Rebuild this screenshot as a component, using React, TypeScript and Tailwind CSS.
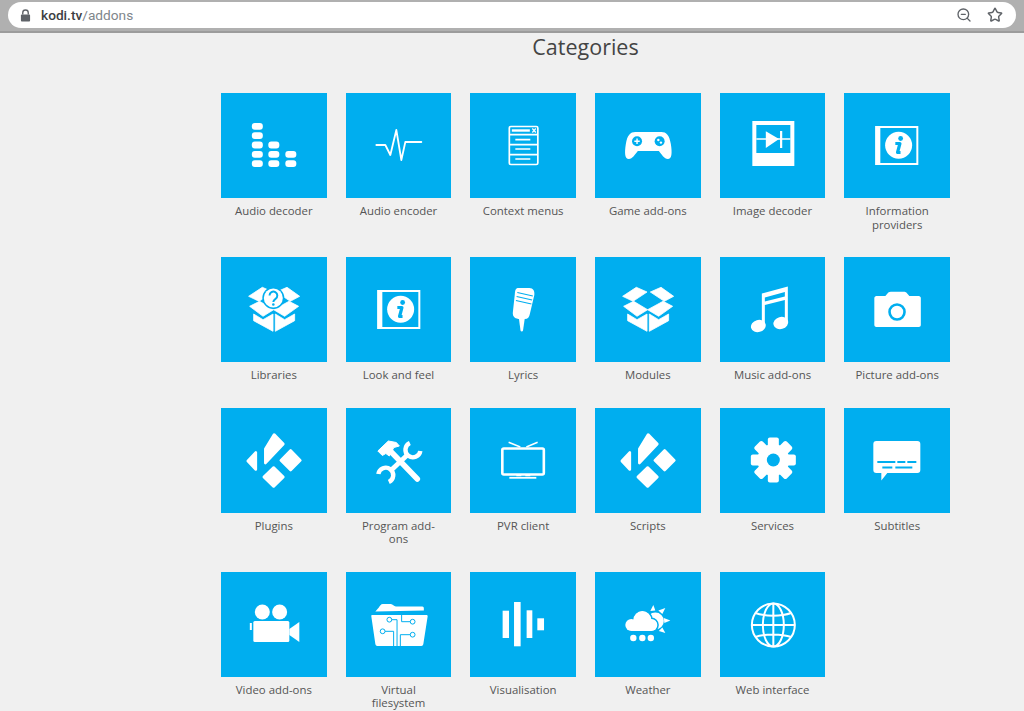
import type { ReactNode } from "react";
import { ZoomOut, Star } from "lucide-react";

const BLUE = "#00aeef";

function Box() {
  return (
    <g fill="#fff" stroke="#fff" strokeWidth="0.8" strokeLinejoin="round">
      <polygon points="27.3,39.3 41,30.3 51.7,35 37.7,44.3" />
      <polygon points="55,35 65.7,30.3 78.3,39.3 69,44.3" />
      <polygon points="28.3,49.3 38.3,44.3 52.3,52.7 41.7,59.3" />
      <polygon points="52.3,52.7 67.7,44.3 77.3,49.3 63.3,59.3" />
      <polygon points="32.3,57 41.7,62.7 51.7,57 51.7,74.3 32.3,63.7" />
      <polygon points="54,57 63.3,62.7 73.3,57 73.3,63.7 54,74.3" />
    </g>
  );
}

function InfoIcon() {
  return (
    <>
      <rect x="32" y="34" width="41" height="37" fill="none" stroke="#fff" strokeWidth="2" />
      <rect x="31" y="33" width="5" height="39" fill="#fff" />
      <circle cx="54.3" cy="52.3" r="13.5" fill="#fff" />
      <circle cx="56.3" cy="45.5" r="2.4" fill={BLUE} />
      <path d="M51 50.5h4.6l-2.4 9h3" fill="none" stroke={BLUE} strokeWidth="3.2" strokeLinejoin="round" />
    </>
  );
}

function KodiIcon() {
  return (
    <g fill="#fff" stroke="#fff" strokeWidth="2.6" strokeLinejoin="round">
      <polygon points="26.5,53 34.5,44.5 34.5,61.5" />
      <polygon points="44,41 52.8,26.5 62,36 44,55" />
      <polygon points="69.3,42.5 79,52.3 69.3,62 59.5,52.3" />
      <polygon points="52.3,59.5 62,69 52.3,78.5 42.5,69" />
    </g>
  );
}

function GearIcon() {
  const angles = [0, 45, 90, 135, 180, 225, 270, 315];
  return (
    <>
      <circle cx="53" cy="52" r="16" fill="#fff" />
      {angles.map((a) => (
        <rect key={a} x="47.5" y="29.5" width="11" height="10" rx="2" fill="#fff" transform={`rotate(${a} 53 52)`} />
      ))}
      <circle cx="53" cy="52" r="6.5" fill={BLUE} />
    </>
  );
}

const icons: Record<string, ReactNode> = {
  audioDecoder: (
    <g fill="#fff">
      {[33.3, 42.7, 52, 61.3, 70.7].map((y) => (
        <rect key={y} x="30.5" y={y - 3.4} width="11" height="6.8" rx="3" />
      ))}
      {[52, 61.3, 70.7].map((y) => (
        <rect key={y} x="47" y={y - 3.4} width="11" height="6.8" rx="3" />
      ))}
      {[61.3, 70.7].map((y) => (
        <rect key={y} x="64" y={y - 3.4} width="11" height="6.8" rx="3" />
      ))}
    </g>
  ),
  audioEncoder: (
    <polyline points="30,52 39,52 44,62 50,37 55,67 59,49 75,49" fill="none" stroke="#fff" strokeWidth="1.8" strokeLinejoin="round" strokeLinecap="round" />
  ),
  contextMenus: (
    <g fill="none" stroke="#fff" strokeWidth="1.7">
      <rect x="39" y="33.5" width="28.5" height="38" rx="1.5" />
      <path d="M39 41.7h28.5M39 51.7h28.5M39 61.7h28.5M45 46.7h15M45 56h15M45 66h15" />
      <path d="M41.5 37.5h18" strokeWidth="2.4" />
      <path d="M62 35.500l3.5 4M65.500 35.500l-3.5 4" strokeWidth="1.2" />
    </g>
  ),
  game: (
    <>
      <path d="M40 39h26c5 0 8 3 9.500 12 1.500 9 1 15-3 15-3.500 0-6.500-5-9-8H42.500c-2.500 3-5.500 8-9 8-4 0-4.500-6-3-15C32 42 35 39 40 39z" fill="#fff" />
      <circle cx="41.7" cy="48.3" r="5" fill={BLUE} />
      <circle cx="64.3" cy="48.3" r="5" fill={BLUE} />
      <path d="M39 48.3h5.400M41.700 45.600v5.400" stroke="#fff" strokeWidth="1.4" />
      <circle cx="63" cy="47" r="1.2" fill="#fff" />
      <circle cx="65.6" cy="49.6" r="1.2" fill="#fff" />
    </>
  ),
  imageDecoder: (
    <>
      <path d="M32 28h42v45H32zM36 32v28h34V32z" fill="#fff" fillRule="evenodd" />
      <path d="M36 46h34" stroke="#fff" strokeWidth="1.4" />
      <polygon points="45.5,38.3 58.7,46 45.5,55" fill="#fff" />
      <rect x="59.7" y="38" width="2.2" height="17" fill="#fff" />
    </>
  ),
  info: <InfoIcon />,
  libraries: (
    <>
      <Box />
      <circle cx="52" cy="41" r="11" fill={BLUE} />
      <circle cx="52" cy="41" r="9.5" fill="#fff" />
      <path d="M48.200 38.500a3.900 3.900 0 1 1 6 3.300c-1.500 1-2.200 1.500-2.200 3.200" fill="none" stroke={BLUE} strokeWidth="2" />
      <circle cx="52" cy="47.500" r="1.3" fill={BLUE} />
    </>
  ),
  lyrics: (
    <>
      <path d="M48 31h11c4 0 5.500 3 5 7l-4.500 19c-.5 3-2 5-5 5h-5c-4 0-7.500-2-7-6.500L44.500 37c.3-4 1-6 3.500-6z" fill="#fff" />
      <path d="M47 35.500l15.500 3.500M46.300 39.500l15.500 3.500M45.600 43.500l15.500 3.500" stroke={BLUE} strokeWidth="1.2" />
      <path d="M48.500 61h6l-1.800 12.500a1.300 1.300 0 0 1-2.500 0z" fill="#fff" />
    </>
  ),
  modules: <Box />,
  music: (
    <>
      <ellipse cx="38" cy="69" rx="7.500" ry="6" fill="#fff" transform="rotate(-15 38 69)" />
      <ellipse cx="60.5" cy="66" rx="7.500" ry="6" fill="#fff" transform="rotate(-15 60.5 66)" />
      <path d="M41.500 69V36.500L67.500 29.500V66h-3V43l-20 5v21zM44.500 40.500v4L64.500 39.500v-4.500z" fill="#fff" fillRule="evenodd" />
    </>
  ),
  camera: (
    <>
      <path d="M32 39h9l3-3.500c.8-.6 1.500-.8 2.500-.8h13c1 0 2 .3 2.500.8l3 3.500h9.500c1 0 2 1 2 2v27c0 1-1 2-2 2H32c-1 0-2-1-2-2V41c0-1 1-2 2-2z" fill="#fff" />
      <circle cx="52.7" cy="55" r="7.5" fill="none" stroke={BLUE} strokeWidth="2.6" />
    </>
  ),
  tools: (
    <g fill="none" stroke="#fff" strokeLinejoin="round">
      <path d="M63.500 35A7.500 7.500 0 1 0 74 43" strokeWidth="4.4" />
      <path d="M42.500 74A7.500 7.500 0 1 0 32 66" strokeWidth="4.4" />
      <path d="M61 47L45 62" strokeWidth="4.8" />
      <path d="M44 43l27 28" strokeWidth="5.5" strokeLinecap="round" />
      <polygon points="31.500,43 42,33 50,34.500 53,38 47.500,39.500 43,48 39.500,45.500 36,47.500" fill="#fff" strokeWidth="1" />
    </g>
  ),
  pvr: (
    <g fill="none" stroke="#fff">
      <rect x="32" y="40.500" width="41.500" height="26" rx="1.5" strokeWidth="2.6" />
      <path d="M38.300 34.300L50 39M67.300 34.300L56 39" strokeWidth="1.5" />
      <path d="M39 69.800h27" strokeWidth="1.8" />
      <path d="M46 67.500h5M55 67.500h5" strokeWidth="1.6" />
    </g>
  ),
  gear: <GearIcon />,
  subtitles: (
    <>
      <path d="M32 33h41c2 0 3 1 3 3v26c0 2-1 3-3 3H43l-6 7.500V65h-5c-2 0-3-1-3-3V36c0-2 1-3 3-3z" fill="#fff" />
      <path d="M33 54h18M53 54h8M63 54h9M38 59.500h10M51 59.500h17" stroke={BLUE} strokeWidth="2" />
    </>
  ),
  video: (
    <g fill="#fff">
      <circle cx="41" cy="40" r="7.5" />
      <circle cx="58.3" cy="40" r="7.5" />
      <rect x="32" y="49" width="36" height="21" rx="1.5" />
      <polygon points="68,57 78,50 78,70 68,63" />
      <rect x="28.5" y="51" width="2" height="7" />
    </g>
  ),
  folder: (
    <>
      <path d="M29 39.500l3.500-4c1-1.500 2-3.500 4-3.500h8c2 0 3 2.500 5 2.500H76c1 0 1.500 1 1.500 1.700v2.300z" fill="#fff" />
      <path d="M26 43h54c1 0 1.500.5 1.300 1.500L77 72c-.2 1.300-1 2-2 2H31c-1 0-1.800-.7-2-2L25 44.500C24.800 43.500 25 43 26 43z" fill="#fff" />
      <g fill="none" stroke={BLUE} strokeWidth="1">
        <circle cx="43" cy="47.7" r="2.4" />
        <path d="M45.400 47.700h5.300v26.300" />
        <circle cx="36.3" cy="59.3" r="2.4" />
        <path d="M38.700 59.300h8.600v14.700" />
        <circle cx="66.3" cy="49.7" r="2.4" />
        <path d="M63.900 49.700h-8.600v-7" />
        <circle cx="66.3" cy="62.7" r="2.4" />
        <path d="M63.900 62.700H54v11.300" />
      </g>
    </>
  ),
  visualisation: (
    <g fill="#fff">
      <rect x="32.3" y="38.7" width="6.4" height="27.3" />
      <rect x="43.7" y="30" width="6.6" height="44.3" />
      <rect x="56.3" y="38.3" width="5.7" height="27.7" />
      <rect x="67" y="46.3" width="6.7" height="12" />
    </g>
  ),
  weather: (
    <>
      <g fill="#fff">
        <circle cx="60" cy="49" r="8.5" />
        <polygon points="55,39 58,33 60,38.500" />
        <polygon points="63,38.500 70,36 67,42" />
        <polygon points="68.500,46 75,48.500 69,51" />
        <polygon points="67,55.500 70,61 63.500,59" />
      </g>
      <g fill="#fff" stroke={BLUE} strokeWidth="2">
        <circle cx="47" cy="48" r="9.5" />
        <circle cx="56" cy="53" r="6.5" />
      </g>
      <g fill="#fff">
        <circle cx="36" cy="53" r="6" />
        <circle cx="47" cy="48" r="9" />
        <circle cx="56" cy="53" r="6" />
        <rect x="36" y="50" width="20" height="9" />
        <circle cx="38" cy="66" r="3.2" />
        <circle cx="47" cy="66" r="3.2" />
        <circle cx="55.5" cy="66" r="3.2" />
      </g>
    </>
  ),
  globe: (
    <g fill="none" stroke="#fff" strokeWidth="2">
      <circle cx="53" cy="53" r="21.5" />
      <ellipse cx="53" cy="53" rx="10.5" ry="21.5" />
      <path d="M53 31.500v43M31.500 53h43M35 41c10 3.500 26 3.500 36 0M35 65c10-3.500 26-3.500 36 0" />
    </g>
  ),
};

const items: { label: string; icon: string }[] = [
  { label: "Audio decoder", icon: "audioDecoder" },
  { label: "Audio encoder", icon: "audioEncoder" },
  { label: "Context menus", icon: "contextMenus" },
  { label: "Game add-ons", icon: "game" },
  { label: "Image decoder", icon: "imageDecoder" },
  { label: "Information providers", icon: "info" },
  { label: "Libraries", icon: "libraries" },
  { label: "Look and feel", icon: "info" },
  { label: "Lyrics", icon: "lyrics" },
  { label: "Modules", icon: "modules" },
  { label: "Music add-ons", icon: "music" },
  { label: "Picture add-ons", icon: "camera" },
  { label: "Plugins", icon: "kodi" },
  { label: "Program add-ons", icon: "tools" },
  { label: "PVR client", icon: "pvr" },
  { label: "Scripts", icon: "kodi" },
  { label: "Services", icon: "gear" },
  { label: "Subtitles", icon: "subtitles" },
  { label: "Video add-ons", icon: "video" },
  { label: "Virtual filesystem", icon: "folder" },
  { label: "Visualisation", icon: "visualisation" },
  { label: "Weather", icon: "weather" },
  { label: "Web interface", icon: "globe" },
];

function CategoryTile({ label, icon }: { label: string; icon: string }) {
  return (
    <div className="flex flex-col items-center">
      <div className="h-[105px] w-full bg-[#00aeef]">
        <svg viewBox="0 0 105 105" className="h-full w-full">
          {icon === "kodi" ? <KodiIcon /> : icons[icon]}
        </svg>
      </div>
      <p className="mt-[6px] px-2 text-center text-[11.4px] leading-[13.5px] text-[#555555]">{label}</p>
    </div>
  );
}

export default function App() {
  return (
    <div className="h-[711px] w-[1024px] overflow-hidden bg-[#f0f0f0] font-['Open_Sans',sans-serif]">
      {/* barre du navigateur */}
      <div className="flex h-[33px] items-start border-b-2 border-[#9c9c9c] bg-[#b0b0b0] px-2 pt-[2px]">
        <div className="flex h-[26px] w-full items-center rounded-full bg-white pr-[13px] pl-3">
          <svg viewBox="0 0 12 14" className="h-[13px] w-[11px]">
            <path d="M3 6V4a3 3 0 0 1 6 0v2" fill="none" stroke="#5f6368" strokeWidth="1.5" />
            <rect x="1" y="6" width="10" height="7.5" rx="1" fill="#5f6368" />
          </svg>
          <span className="ml-[10px] font-['Roboto',sans-serif] text-[13.7px] text-[#80868b]">
            <span className="font-medium text-[#3c4043]">kodi.tv</span>/addons
          </span>
          <div className="ml-auto flex items-center gap-[15px]">
            <ZoomOut className="h-4 w-4 text-[#5f6368]" strokeWidth={2} />
            <Star className="h-4 w-4 text-[#5f6368]" strokeWidth={2.2} />
          </div>
        </div>
      </div>

      <div className="ml-[221px] w-[729px]">
        <h2 className="h-[60px] pt-[1px] text-center text-[21.5px] leading-[26px] text-[#444444]">Categories</h2>
        <div className="grid grid-cols-6 gap-x-[19px] gap-y-[26px]">
          {items.map((item) => (
            <CategoryTile key={item.label} label={item.label} icon={item.icon} />
          ))}
        </div>
      </div>
    </div>
  );
}
